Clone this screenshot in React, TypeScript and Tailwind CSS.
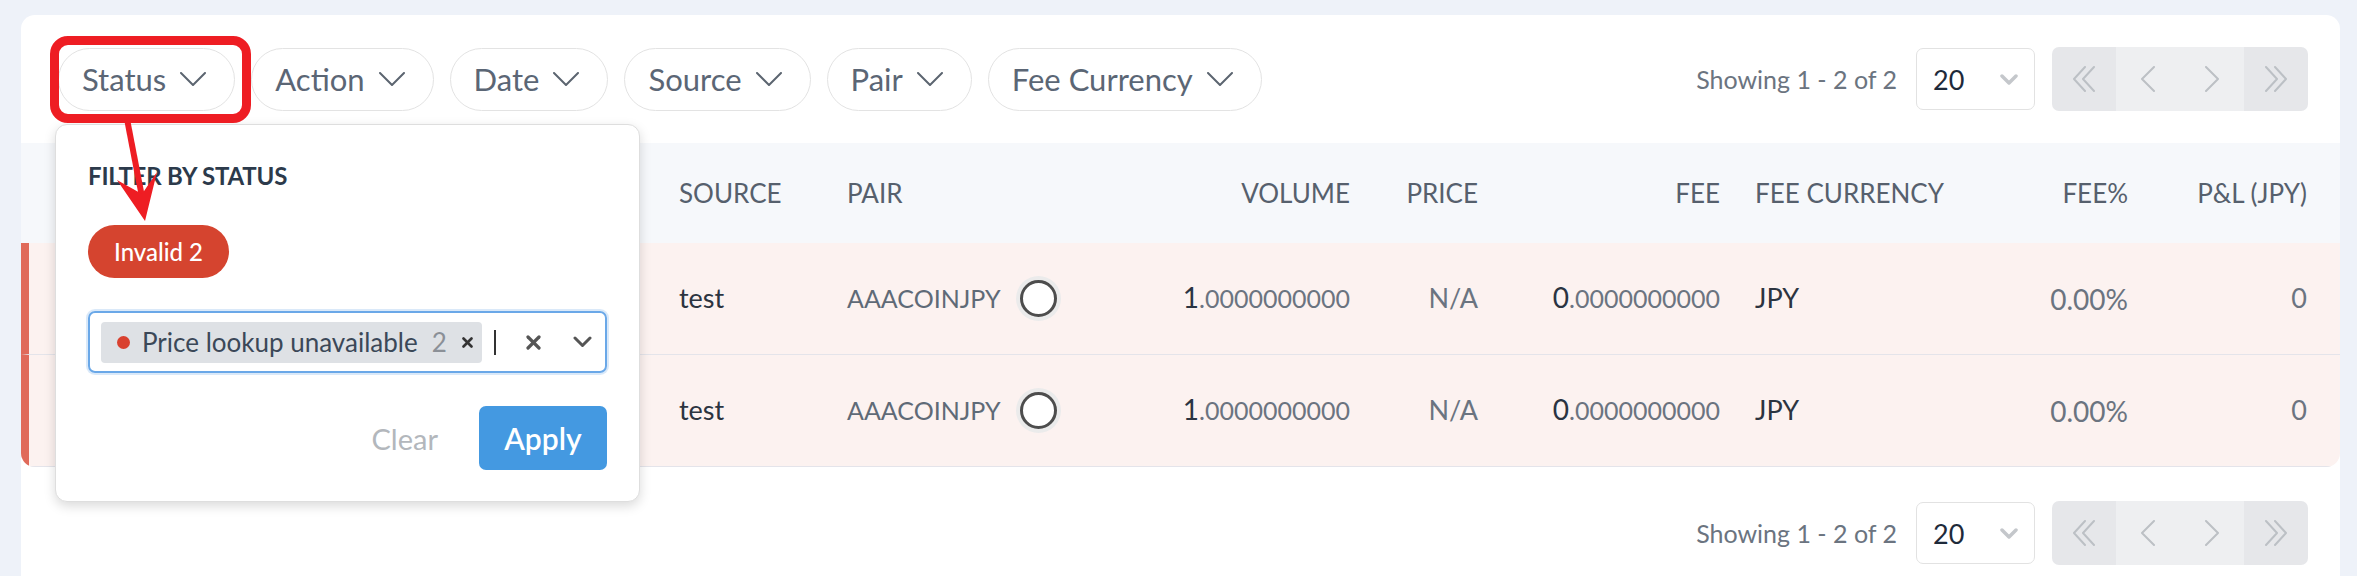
import React from "react";

const Chevron = () => (
  <svg width="26" height="14" viewBox="0 0 26 14" fill="none" stroke="#5c6570" strokeWidth="2" strokeLinecap="round" strokeLinejoin="round">
    <polyline points="1,1 13,13 25,1" />
  </svg>
);

const Chip = ({ label }: { label: string }) => (
  <button className="flex items-center gap-[14px] h-[63px] pl-[23px] pr-[28px] rounded-full border border-[#e3e3e3] bg-white text-[31px] leading-none text-[#5b6675]">
    <span>{label}</span>
    <Chevron />
  </button>
);

const PagIcon = ({ kind }: { kind: "first" | "prev" | "next" | "last" }) => {
  const common = { fill: "none", stroke: "#bcc0c5", strokeWidth: 2, strokeLinecap: "round" as const, strokeLinejoin: "round" as const };
  if (kind === "first")
    return (
      <svg width="26" height="26" viewBox="0 0 26 26" {...common}>
        <polyline points="14,1 3,13 14,25" />
        <polyline points="23,1 12,13 23,25" />
      </svg>
    );
  if (kind === "last")
    return (
      <svg width="26" height="26" viewBox="0 0 26 26" {...common}>
        <polyline points="3,1 14,13 3,25" />
        <polyline points="12,1 23,13 12,25" />
      </svg>
    );
  if (kind === "prev")
    return (
      <svg width="16" height="26" viewBox="0 0 16 26" {...common}>
        <polyline points="14,1 2,13 14,25" />
      </svg>
    );
  return (
    <svg width="16" height="26" viewBox="0 0 16 26" {...common}>
      <polyline points="2,1 14,13 2,25" />
    </svg>
  );
};

const Pagination = () => (
  <div className="flex items-center">
    <span className="text-[25px] text-[#6b7480] leading-none">Showing 1 - 2 of 2</span>
    <div className="ml-[19px] flex items-center justify-between w-[119px] h-[62px] pl-[16px] pr-[16px] border border-[#e2e2e2] rounded-[7px] bg-white">
      <span className="text-[27px] text-[#1e2a3a] leading-none">20</span>
      <svg width="18" height="11" viewBox="0 0 18 11" fill="none" stroke="#c4c7cb" strokeWidth="3.5" strokeLinecap="round" strokeLinejoin="round">
        <polyline points="2,2 9,9 16,2" />
      </svg>
    </div>
    <div className="ml-[17px] flex rounded-[7px] overflow-hidden">
      <div className="w-[64px] h-[64px] flex items-center justify-center bg-[#e6e7ea]"><PagIcon kind="first" /></div>
      <div className="w-[64px] h-[64px] flex items-center justify-center bg-[#eeeff1]"><PagIcon kind="prev" /></div>
      <div className="w-[64px] h-[64px] flex items-center justify-center bg-[#eeeff1]"><PagIcon kind="next" /></div>
      <div className="w-[64px] h-[64px] flex items-center justify-center bg-[#e6e7ea]"><PagIcon kind="last" /></div>
    </div>
  </div>
);

const GRID = "grid grid-cols-[658px_168px_253px_250px_128px_242px_270px_138px_179px_1fr] items-center";
const ROWGRID = "grid grid-cols-[650px_168px_253px_250px_128px_242px_270px_138px_179px_1fr] items-center";

const Num = ({ head, tail }: { head: string; tail: string }) => (
  <span className="leading-none">
    <span className="text-[28px] text-[#2a3442]">{head}</span>
    <span className="text-[25px] text-[#6b7480]">{tail}</span>
  </span>
);

const Row = () => (
  <div className={`${ROWGRID} h-[112px] bg-[#fcf2f0] border-l-[8px] border-l-[#e06a5a] border-b border-b-[#e4e4ea]`}>
    <div />
    <div className="text-[27px] text-[#2c3440]">test</div>
    <div className="flex items-center gap-[19px]">
      <span className="text-[25px] text-[#5f6a77]">AAACOINJPY</span>
      <div className="w-[37px] h-[37px] rounded-full border-[3px] border-[#4d4d4d] bg-white shadow-[0_0_0_4px_#ebebeb]" />
    </div>
    <div className="text-right"><Num head="1" tail=".0000000000" /></div>
    <div className="text-right text-[27px] text-[#6b7480]">N/A</div>
    <div className="text-right"><Num head="0" tail=".0000000000" /></div>
    <div className="pl-[35px] text-[27px] text-[#2c3440]">JPY</div>
    <div className="text-right text-[28px] text-[#6b7480]">0.00%</div>
    <div className="text-right text-[27px] text-[#6b7480]">0</div>
    <div />
  </div>
);

export default function App() {
  return (
    <div className="h-[576px] overflow-hidden bg-[#eef2f9] pt-[15px] pl-[21px] pr-[17px] font-['Lato',sans-serif]">
      <div className="relative bg-white rounded-[14px] min-h-[640px] pt-[32px]">
        {/* toolbar */}
        <div className="flex items-center justify-between h-[64px] pl-[37px] pr-[32px]">
          <div className="flex items-center gap-[16px]">
            <Chip label="Status" />
            <Chip label="Action" />
            <Chip label="Date" />
            <Chip label="Source" />
            <Chip label="Pair" />
            <Chip label="Fee Currency" />
          </div>
          <Pagination />
        </div>

        {/* table */}
        <div className="mt-[32px]">
          <div className={`${GRID} h-[100px] bg-[#f6f8fb] text-[26px] text-[#56606d] uppercase`}>
            <div />
            <div>Source</div>
            <div>Pair</div>
            <div className="text-right">Volume</div>
            <div className="text-right">Price</div>
            <div className="text-right">Fee</div>
            <div className="pl-[35px]">Fee Currency</div>
            <div className="text-right">Fee%</div>
            <div className="text-right">P&amp;L (JPY)</div>
            <div />
          </div>
          <div className="rounded-b-[14px] overflow-hidden">
            <Row />
            <Row />
          </div>
        </div>

        {/* bottom pagination */}
        <div className="mt-[34px] flex justify-end pr-[32px]">
          <Pagination />
        </div>

        {/* popover */}
        <div className="absolute left-[34px] top-[109px] w-[585px] bg-white border border-[#dedede] rounded-[12px] shadow-[0_4px_12px_rgba(0,0,0,0.15)] px-[32px] pt-[37px] pb-[31px]">
          <div className="text-[24px] leading-[28px] font-bold text-[#2c3a4b] tracking-[-0.2px]">FILTER BY STATUS</div>
          <div className="mt-[35px] inline-flex items-center h-[53px] px-[26px] rounded-full bg-[#d5442f] text-white text-[24px] font-medium leading-none">
            Invalid 2
          </div>
          <div className="mt-[33px] flex items-center h-[62px] pl-[11px] border-2 border-[#6aa8e8] rounded-[7px] shadow-[0_0_0_2px_rgba(106,168,232,0.25)]">
            <div className="flex items-center h-[41px] pl-[16px] pr-[9px] rounded-[4px] bg-[#dee1e5]">
              <span className="w-[13px] h-[13px] rounded-full bg-[#d9412f]" />
              <span className="ml-[12px] text-[26px] text-[#3b4858] leading-none">Price lookup unavailable</span>
              <span className="ml-[14px] text-[26px] text-[#8b9097] leading-none">2</span>
              <svg className="ml-[15px]" width="11" height="11" viewBox="0 0 11 11" stroke="#333" strokeWidth="2.6" strokeLinecap="round">
                <line x1="1.5" y1="1.5" x2="9.5" y2="9.5" />
                <line x1="9.5" y1="1.5" x2="1.5" y2="9.5" />
              </svg>
            </div>
            <div className="ml-[12px] w-[2px] h-[25px] bg-[#333]" />
            <svg className="ml-[30px]" width="15" height="15" viewBox="0 0 15 15" stroke="#555" strokeWidth="3.2" strokeLinecap="round">
              <line x1="2" y1="2" x2="13" y2="13" />
              <line x1="13" y1="2" x2="2" y2="13" />
            </svg>
            <svg className="ml-[32px]" width="19" height="12" viewBox="0 0 19 12" fill="none" stroke="#555" strokeWidth="3" strokeLinecap="round" strokeLinejoin="round">
              <polyline points="2,2 9.5,9.5 17,2" />
            </svg>
          </div>
          <div className="mt-[33px] flex items-center justify-end gap-[41px]">
            <span className="text-[29px] text-[#b3b7bc] leading-none">Clear</span>
            <button className="w-[128px] h-[64px] rounded-[7px] bg-[#4499e1] text-white text-[30px] font-semibold leading-none">Apply</button>
          </div>
        </div>

        {/* annotation box */}
        <div className="absolute left-[29px] top-[21px] w-[201px] h-[87px] border-[9px] border-[#ee1d23] rounded-[18px] pointer-events-none" />
        {/* annotation arrow */}
        <svg className="absolute left-[79px] top-[100px] pointer-events-none" width="70" height="115" viewBox="0 0 70 115">
          <line x1="27" y1="4" x2="42" y2="82" stroke="#ee1d23" strokeWidth="6" />
          <polygon points="45,106 17,65 42,79 57,57" fill="#ee1d23" />
        </svg>
      </div>
    </div>
  );
}
